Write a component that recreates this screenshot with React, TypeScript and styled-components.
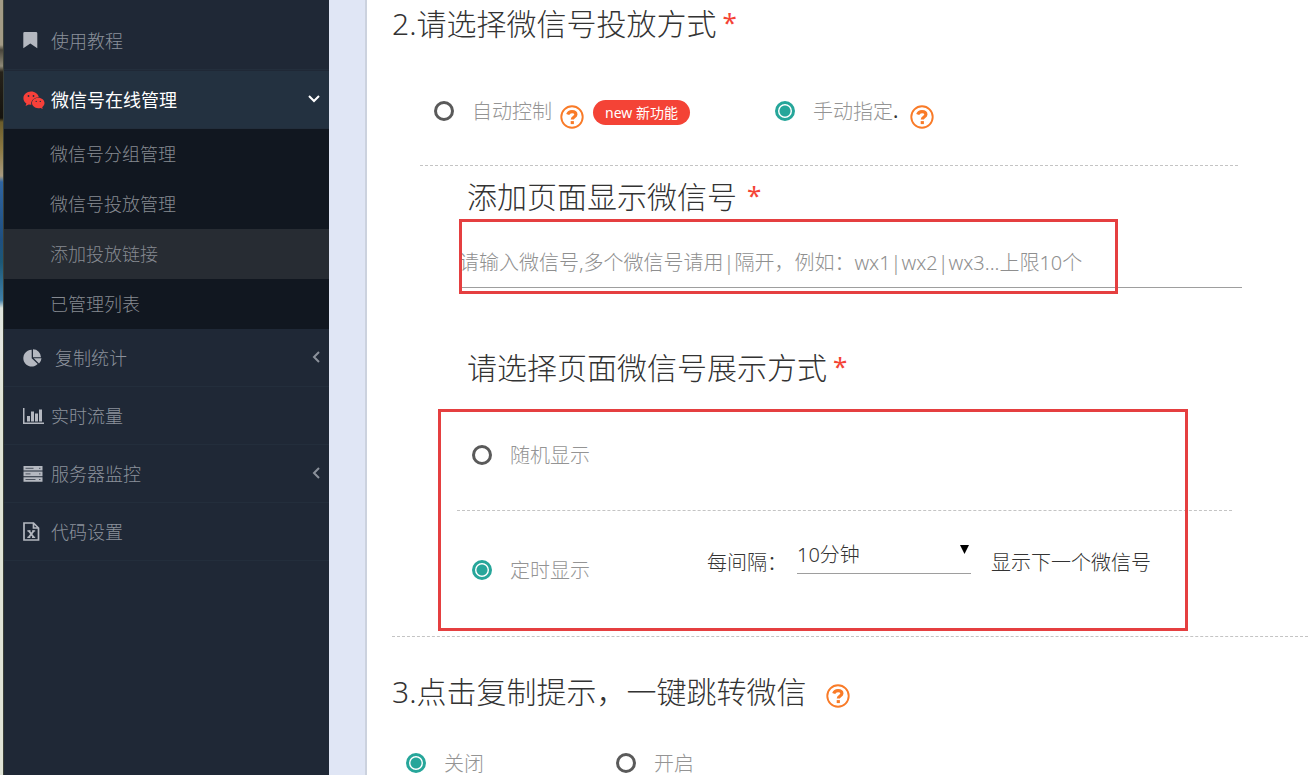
import React from "react";
import styled, { createGlobalStyle, css } from "styled-components";

const GlobalStyle = createGlobalStyle`
  * { box-sizing: border-box; }
  html, body, #root { height: 100%; }
  body {
    margin: 0;
    overflow: hidden;
    background: #fff;
    font-family: "Noto Sans", "Noto Sans CJK SC", sans-serif;
    font-size: 20px;
    color: #333;
  }
`;

const Page = styled.div`
  display: flex;
  min-height: 100%;
`;

const DesktopEdge = styled.div`
  flex: 0 0 4px;
  border-right: 1px solid #3a4038;
  background: linear-gradient(
    #a39b86 0px, #a39b86 45px, #4a463c 50px, #8f8a78 66px, #26221a 72px, #15130e 118px,
    #6b5c2a 122px, #8d7a44 150px, #a89a80 176px, #2f64a0 182px, #1f4f80 240px,
    #1c5876 262px, #3f7fa8 300px, #dfe4dc 308px, #e4e6e0 350px, #dfe3d6 400px, #dfe3d6 100%
  );
`;

const Sidebar = styled.nav`
  flex: 0 0 325px;
  padding-top: 12px;
  background: #1f2836;
  color: #8b919b;
  font-family: "Noto Sans CJK SC", sans-serif;
  font-size: 18px;
`;

const MenuLink = styled.a<{ $active?: boolean }>`
  display: flex;
  align-items: center;
  height: 58px;
  padding: 0 8px 2px 19px;
  border-bottom: 1px solid #232e3c;
  color: inherit;
  text-decoration: none;
  font-weight: 300;
  ${(p) => p.$active && css`
    margin-top: 1px;
    background: #233140;
    color: #fff;
    font-weight: 400;
  `}
`;

const MenuIcon = styled.span<{ $wide?: boolean; $red?: boolean }>`
  display: flex;
  flex: 0 0 ${(p) => (p.$wide ? 32 : 28)}px;
  padding-top: 2px;
  color: ${(p) => (p.$red ? "#f8403a" : "#b4b8c0")};
`;

const Arrow = styled.svg`
  margin-left: auto;
  fill: none;
  stroke: currentColor;
  stroke-width: 2;
`;

const Submenu = styled.div`
  background: #111720;
`;

const SubLink = styled.a<{ $active?: boolean }>`
  display: flex;
  align-items: center;
  height: 50px;
  padding: 0 0 2px 46px;
  background: ${(p) => (p.$active ? "#272c33" : "transparent")};
  color: #868a91;
  text-decoration: none;
  font-weight: 300;
`;

const Gutter = styled.div`
  flex: 0 0 38px;
  background: #e0e6f5;
  border-right: 2px solid #ccd2de;
`;

const Content = styled.main`
  flex: 1;
  min-width: 0;
  height: 100vh;
  overflow: hidden;
  padding-left: 25px;
`;

const Title = styled.h2`
  display: flex;
  align-items: center;
  height: 44px;
  margin: 0;
  font-size: 30px;
  font-weight: 300;
`;

const Subtitle = styled(Title).attrs({ as: "h3" })`
  height: 62px;
  padding: 0 0 4px 75px;
`;

const Required = styled.span<{ $wide?: boolean }>`
  margin-left: ${(p) => (p.$wide ? 10 : 6)}px;
  color: #f44336;
  font-size: 26px;
  font-weight: 400;
`;

const MethodRow = styled.div`
  display: flex;
  align-items: center;
  height: 122px;
  margin: 0 70px 0 28px;
  padding: 12px 0 0 14px;
  border-bottom: 1px dashed #c4c4c4;
`;

const Choice = styled.label`
  display: flex;
  align-items: center;
  gap: 18px;
  color: #949494;
  font-weight: 300;
  line-height: 30px;
`;

const ChoiceText = styled.span`
  padding-top: 2px;
`;

const Radio = styled.input`
  appearance: none;
  flex: none;
  width: 20px;
  height: 20px;
  margin: 0;
  border: 3px solid #5a5a5a;
  border-radius: 50%;
  &:checked {
    border-color: #26a69a;
    background: radial-gradient(circle, #26a69a 0 5px, #fff 6px);
  }
`;

const Help = styled.button<{ $gap: number }>`
  display: flex;
  margin: 12px 0 0 ${(p) => p.$gap}px;
  padding: 0;
  border: 0;
  background: none;
  color: #f97b28;
`;

const Badge = styled.span`
  margin: 4px 85px 0 9px;
  padding: 0 12px;
  border-radius: 13px;
  background: #f44336;
  color: #fff;
  font-size: 14px;
  line-height: 25px;
`;

const Field = styled.div`
  position: relative;
  margin: 0 66px 49px 67px;
`;

const AccountInput = styled.input`
  display: block;
  width: 100%;
  height: 60px;
  padding: 10px 0 0;
  border: 0;
  border-bottom: 1px solid #9e9e9e;
  outline: 0;
  background: none;
  font: inherit;
  font-weight: 300;
  &::placeholder { color: #8f8f8f; opacity: 1; }
`;

const Highlight = styled.div<{ $left: number; $right: number; $top: number; $bottom: number }>`
  position: absolute;
  left: ${(p) => p.$left}px;
  right: ${(p) => p.$right}px;
  top: ${(p) => p.$top}px;
  bottom: ${(p) => p.$bottom}px;
  border: 3px solid #e53f40;
  pointer-events: none;
`;

const Display = styled.section`
  position: relative;
  height: 232px;
  margin: 6px 0 31px;
  border-bottom: 1px dashed #c4c4c4;
`;

const DisplayRow = styled.div<{ $divided?: boolean }>`
  display: flex;
  align-items: center;
  height: ${(p) => (p.$divided ? 106 : 118)}px;
  margin: 0 76px 0 65px;
  padding: 0 0 ${(p) => (p.$divided ? 5 : 0)}px 15px;
  border-bottom: ${(p) => (p.$divided ? "1px dashed #c4c4c4" : "0")};
  font-weight: 300;
`;

const Interval = styled.div`
  display: flex;
  align-items: center;
  margin: -18px 0 0 117px;
`;

const SelectWrap = styled.span`
  position: relative;
  margin: 0 20px 12px 10px;
`;

const Select = styled.select`
  appearance: none;
  display: block;
  width: 174px;
  height: 38px;
  padding: 0;
  border: 0;
  border-bottom: 1px solid #9e9e9e;
  border-radius: 0;
  background: none;
  color: #333;
  font: inherit;
`;

const Caret = styled.svg`
  position: absolute;
  right: 1px;
  top: 9px;
  pointer-events: none;
`;

const OptionsRow = styled.div`
  display: flex;
  gap: 132px;
  padding: 35px 0 0 14px;
`;

const BookmarkIcon = () => (
  <svg width="15" height="17" viewBox="0 0 15 17" fill="currentColor">
    <path d="M1.500 0h11.500a1.300 1.300 0 0 1 1.300 1.300V16.300L7.300 11.500 .3 16.300V1.300A1.300 1.300 0 0 1 1.500 0z" />
  </svg>
);
const WechatIcon = () => (
  <svg width="22" height="18" viewBox="0 0 22 18">
    <path fill="currentColor" d="M8 .5c4 0 7.300 2.500 7.800 5.700-4.200.1-7.600 2.900-7.600 6.300l.1 1.300-2.600-.4L2.600 15l.8-2.600C1.500 11.200.4 9.300.4 7.200.4 3.500 3.800.5 8 .5z" />
    <path fill="currentColor" d="M15.200 6.800c3.500 0 6.300 2.400 6.300 5.300 0 1.700-.9 3.100-2.300 4.100l.5 1.700-2.100-1c-.7.200-1.500.3-2.400.3-3.400 0-6.200-2.300-6.200-5.100 0-2.900 2.800-5.300 6.200-5.300z" />
    <g fill="#233140">
      <circle cx="5.500" cy="5" r=".9" />
      <circle cx="10.500" cy="5" r=".9" />
      <circle cx="13.200" cy="10.400" r=".7" />
      <circle cx="17.300" cy="10.400" r=".7" />
    </g>
  </svg>
);
const PieIcon = () => (
  <svg width="19" height="18" viewBox="0 0 19 18" fill="currentColor">
    <path d="M8.700 .8v8.400l6 5.900A8.400 8.400 0 1 1 8.700.8zM10 .3a8 8 0 0 1 8 8h-8zM10.700 9.300h7.800a8 8 0 0 1-2.500 5.200z" />
  </svg>
);
const BarIcon = () => (
  <svg width="21" height="16" viewBox="0 0 21 16" fill="currentColor">
    <path d="M0 0h1.500v14.500H21V16H0zM4 8h3v5.500H4zM8 3.500h3v10H8zM12 5.500h3v8h-3zM16 1.500h3v12h-3z" />
  </svg>
);
const ServerIcon = () => (
  <svg width="20" height="16" viewBox="0 0 20 16">
    <path fill="currentColor" d="M.5 0h19v4.600H.5zM.5 5.600h19v4.600H.5zM.5 11.200h19v4.600H.5z" />
    <path stroke="#1f2836" strokeOpacity=".7" d="M2.500 2.300h8M2.500 7.900h5M2.500 13.500h10M16 2.300h1.500M16 7.900h1.500M16 13.500h1.500" />
  </svg>
);
const SheetIcon = () => (
  <svg width="17" height="19" viewBox="0 0 17 19" fill="none" stroke="currentColor">
    <path strokeWidth="1.700" d="M1 1h9.500L15.500 6v12H1zM10.500 1v5h5" />
    <path strokeWidth="1.900" d="M5.700 8.700l5 6.600M10.800 8.700l-5 6.600" />
    <path strokeWidth="1.200" d="M4.300 8.800h3.200M9.200 8.800h3M4.300 15.300h3M9 15.300h3.200" />
  </svg>
);

const ArrowLeft = () => (
  <Arrow width="9" height="12" viewBox="0 0 9 12"><path d="M7 1L2 6l5 5" /></Arrow>
);
const ArrowDown = () => (
  <Arrow width="14" height="10" viewBox="0 0 14 10"><path d="M2 2l5 5 5-5" /></Arrow>
);

const HelpButton = ({ gap = 8 }: { gap?: number }) => (
  <Help type="button" aria-label="帮助" $gap={gap}>
    <svg width="24" height="24" viewBox="0 0 24 24" fill="none" stroke="currentColor">
      <circle cx="12" cy="12" r="10.700" strokeWidth="1.900" />
      <path strokeWidth="3.200" d="M7.700 9.500C8.500 7.300 10 6.600 12 6.600c2.300 0 3.900 1.200 3.900 3 0 2.500-3.600 2.400-3.600 5" />
      <path strokeWidth="3" d="M10.700 17.600h3.200" />
    </svg>
  </Help>
);

const Option = ({ group, text, on }: { group: string; text: string; on?: boolean }) => (
  <Choice>
    <Radio type="radio" name={group} defaultChecked={on} />
    <ChoiceText>{text}</ChoiceText>
  </Choice>
);

const submenu = ["微信号分组管理", "微信号投放管理", "添加投放链接", "已管理列表"];

export default function App() {
  return (
    <Page>
      <GlobalStyle />
      <DesktopEdge />
      <Sidebar>
        <MenuLink href="#guide"><MenuIcon><BookmarkIcon /></MenuIcon>使用教程</MenuLink>
        <MenuLink href="#wechat" $active>
          <MenuIcon $red><WechatIcon /></MenuIcon>微信号在线管理<ArrowDown />
        </MenuLink>
        <Submenu>
          {submenu.map((name, i) => (
            <SubLink key={name} href={"#sub" + i} $active={i === 2}>{name}</SubLink>
          ))}
        </Submenu>
        <MenuLink href="#copy"><MenuIcon $wide><PieIcon /></MenuIcon>复制统计<ArrowLeft /></MenuLink>
        <MenuLink href="#traffic"><MenuIcon><BarIcon /></MenuIcon>实时流量</MenuLink>
        <MenuLink href="#server"><MenuIcon><ServerIcon /></MenuIcon>服务器监控<ArrowLeft /></MenuLink>
        <MenuLink href="#code"><MenuIcon><SheetIcon /></MenuIcon>代码设置</MenuLink>
      </Sidebar>
      <Gutter />
      <Content>
        <Title>2.请选择微信号投放方式<Required>*</Required></Title>
        <MethodRow>
          <Option group="method" text="自动控制" />
          <HelpButton />
          <Badge>new 新功能</Badge>
          <Option group="method" text="手动指定" on />
          <span>.</span>
          <HelpButton gap={12} />
        </MethodRow>
        <Subtitle>添加页面显示微信号<Required $wide>*</Required></Subtitle>
        <Field>
          <AccountInput aria-label="添加页面显示微信号" placeholder="请输入微信号,多个微信号请用|隔开，例如：wx1|wx2|wx3...上限10个" />
          <Highlight $left={0} $right={124} $top={-9} $bottom={-6} />
        </Field>
        <Subtitle>请选择页面微信号展示方式<Required>*</Required></Subtitle>
        <Display>
          <DisplayRow $divided>
            <Option group="display" text="随机显示" />
          </DisplayRow>
          <DisplayRow>
            <Option group="display" text="定时显示" on />
            <Interval>
              <label htmlFor="interval">每间隔：</label>
              <SelectWrap>
                <Select id="interval"><option>10分钟</option></Select>
                <Caret width="10" height="10" viewBox="0 0 10 10"><path d="M0 0h9L4.500 9z" /></Caret>
              </SelectWrap>
              <span>显示下一个微信号</span>
            </Interval>
          </DisplayRow>
          <Highlight $left={46} $right={120} $top={4} $bottom={5} />
        </Display>
        <Title>
          3.点击复制提示，一键跳转微信
          <HelpButton gap={20} />
        </Title>
        <OptionsRow>
          <Option group="jump" text="关闭" on />
          <Option group="jump" text="开启" />
        </OptionsRow>
      </Content>
    </Page>
  );
}
